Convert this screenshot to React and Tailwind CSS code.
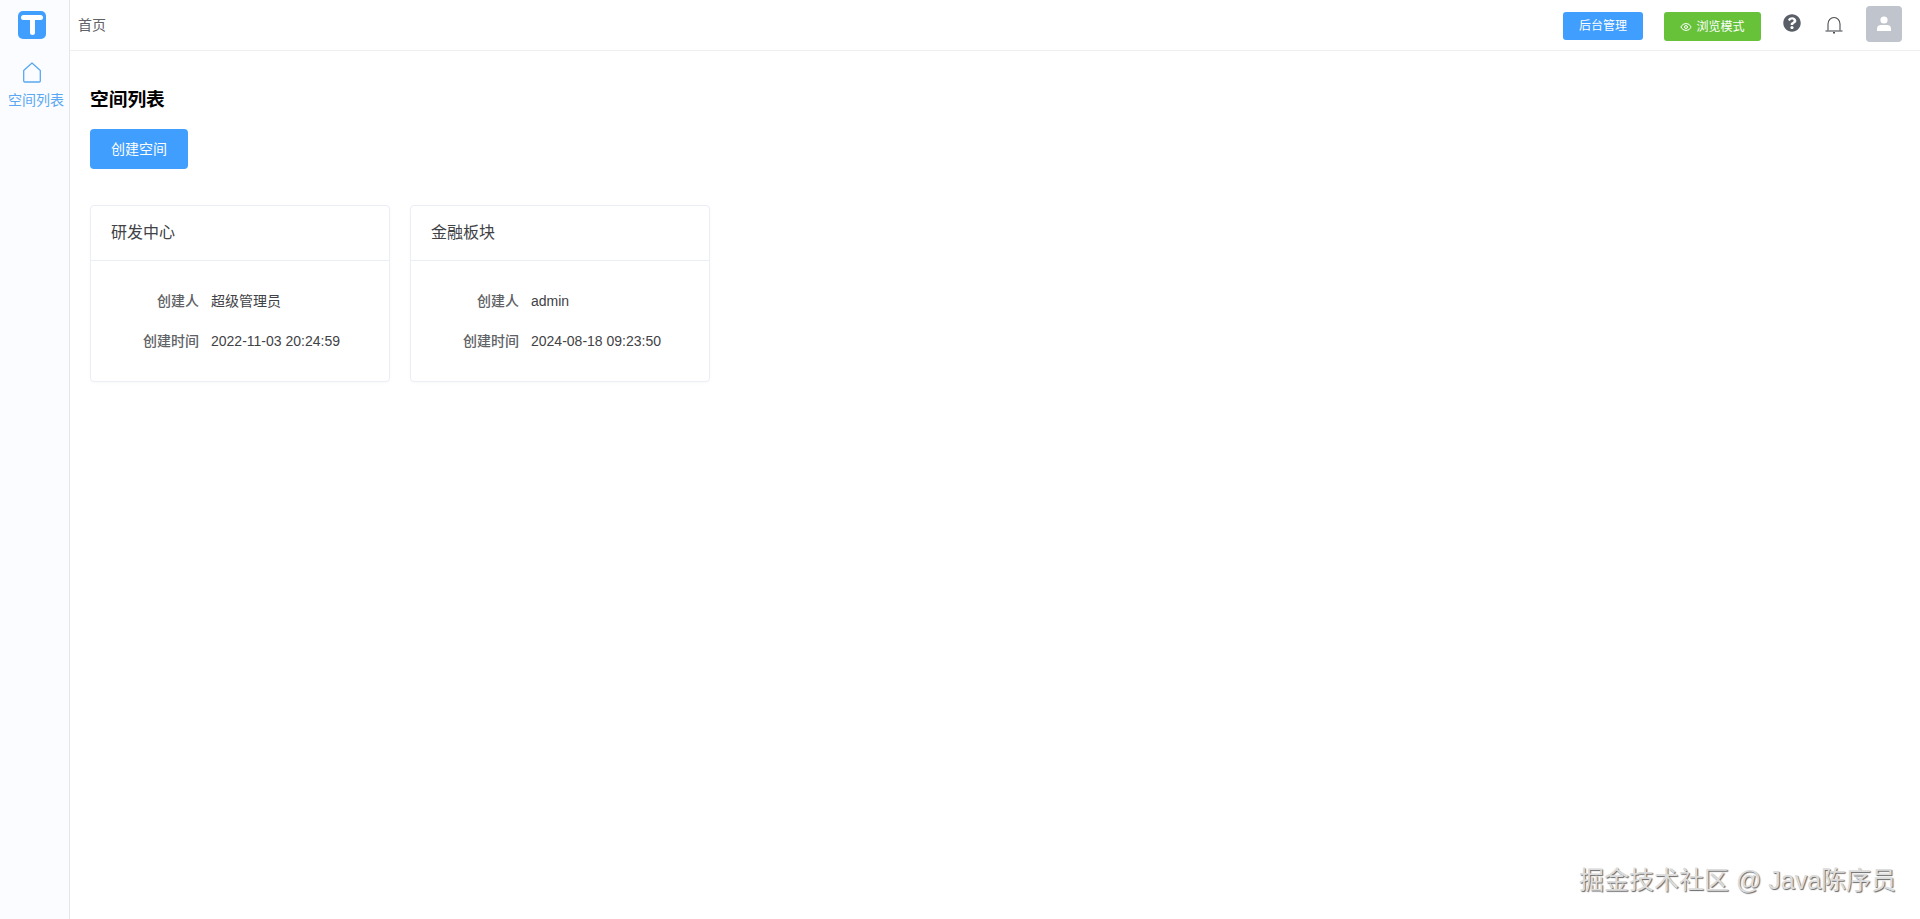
import { Eye } from "lucide-react";
import { FaQuestionCircle } from "react-icons/fa";

const spaces = [
  { name: "研发中心", creator: "超级管理员", time: "2022-11-03 20:24:59" },
  { name: "金融板块", creator: "admin", time: "2024-08-18 09:23:50" },
];

const fontStack = "font-['Liberation_Sans','Noto_Sans_CJK_SC',sans-serif]";

function Sidebar() {
  return (
    <aside className="w-[70px] shrink-0 bg-[#fafcff] border-r border-[#e6e6e6] flex flex-col items-start pl-[18px] pt-[11px]">
      <svg width="28" height="28" viewBox="0 0 28 28">
        <rect width="28" height="28" rx="5" fill="#409eff" />
        <path d="M5.500 4h17a2.500 2.500 0 0 1 0 5H17v12.500a2.500 2.500 0 0 1-5 0V9H5.500a2.500 2.500 0 0 1 0-5z" fill="#fff" />
      </svg>
      <svg className="mt-[23px] ml-[5px]" width="18" height="21" viewBox="0 0 18 21" fill="none" stroke="#5aa8f2" strokeWidth="1.300">
        <path d="M9 1 L17.300 8.500 V19 a1 1 0 0 1-1 1 H1.700 a1 1 0 0 1-1-1 V8.500 Z" strokeLinejoin="round" />
      </svg>
      <span className="mt-[7px] -ml-[10px] text-sm leading-5 text-[#5aa8f2] whitespace-nowrap">空间列表</span>
    </aside>
  );
}

function Header() {
  return (
    <header className="h-[51px] shrink-0 border-b border-[#efefef] flex items-center pl-2 pr-[18px]">
      <span className="text-sm text-[#606266] mb-[1px]">首页</span>
      <div className="ml-auto flex items-center">
        <button className="mt-[2px] w-20 h-7 rounded-[3px] bg-[#409eff] text-white text-xs">后台管理</button>
        <button className="mt-[3px] ml-[21px] w-[97px] h-[29px] rounded-[3px] bg-[#67c23a] text-white text-xs flex items-center justify-center gap-1">
          <Eye size={12} strokeWidth={2} />
          <span>浏览模式</span>
        </button>
        <FaQuestionCircle className="ml-[22px] mb-[4px] text-[#5a5e66]" size={18} />
        <svg className="ml-[24px]" width="18" height="18" viewBox="0 0 18 18" fill="none" stroke="#4a4d52" strokeWidth="1.100">
          <path d="M3 14.500V8a6 6.500 0 0 1 12 0v6.500" />
          <path d="M0.500 15h17" />
          <path d="M8 16.800h2" strokeWidth="1.400" />
        </svg>
        <div className="mb-[2px] ml-[23px] w-9 h-9 rounded-[4px] bg-[#c0c4cc] flex items-center justify-center">
          <svg width="16" height="16" viewBox="0 0 16 16" fill="#fff">
            <circle cx="8" cy="4" r="3.600" />
            <path d="M1 15v-2.500C1 10 3 9 5 9h6c2 0 4 1 4 3.500V15z" />
          </svg>
        </div>
      </div>
    </header>
  );
}

function SpaceCard({ space }) {
  return (
    <div className="w-[300px] h-[177px] bg-white border border-[#ebeef5] rounded-[4px] shadow-[0_1px_3px_rgba(0,0,0,0.03)]">
      <div className="h-[55px] border-b border-[#ebeef5] flex items-center pl-5 text-base text-[#404246]">
        {space.name}
      </div>
      <div className="pt-5 text-sm text-[#3f4246]">
        <div className="flex items-center h-10">
          <span className="w-[108px] text-right font-medium text-[#606266]">创建人</span>
          <span className="ml-3">{space.creator}</span>
        </div>
        <div className="flex items-center h-10">
          <span className="w-[108px] text-right font-medium text-[#606266]">创建时间</span>
          <span className="ml-3">{space.time}</span>
        </div>
      </div>
    </div>
  );
}

export default function App() {
  return (
    <div className={`relative h-[919px] flex bg-white overflow-hidden ${fontStack}`}>
      <Sidebar />
      <div className="flex-1 flex flex-col">
        <Header />
        <main className="pl-5 pt-[37px]">
          <h1 className="text-[18.72px] leading-6 font-bold text-black">空间列表</h1>
          <button className="mt-[17px] w-[98px] h-10 rounded-[4px] bg-[#409eff] text-white text-sm">创建空间</button>
          <div className="mt-9 flex gap-5">
            {spaces.map((s) => (
              <SpaceCard key={s.name} space={s} />
            ))}
          </div>
        </main>
      </div>
      <div className="absolute left-[1579px] top-[866px] text-[25px] leading-7 whitespace-nowrap text-[#dcdcdc] [text-shadow:1px_1px_1px_rgba(0,0,0,0.6)]">
        掘金技术社区 @ Java陈序员
      </div>
    </div>
  );
}
